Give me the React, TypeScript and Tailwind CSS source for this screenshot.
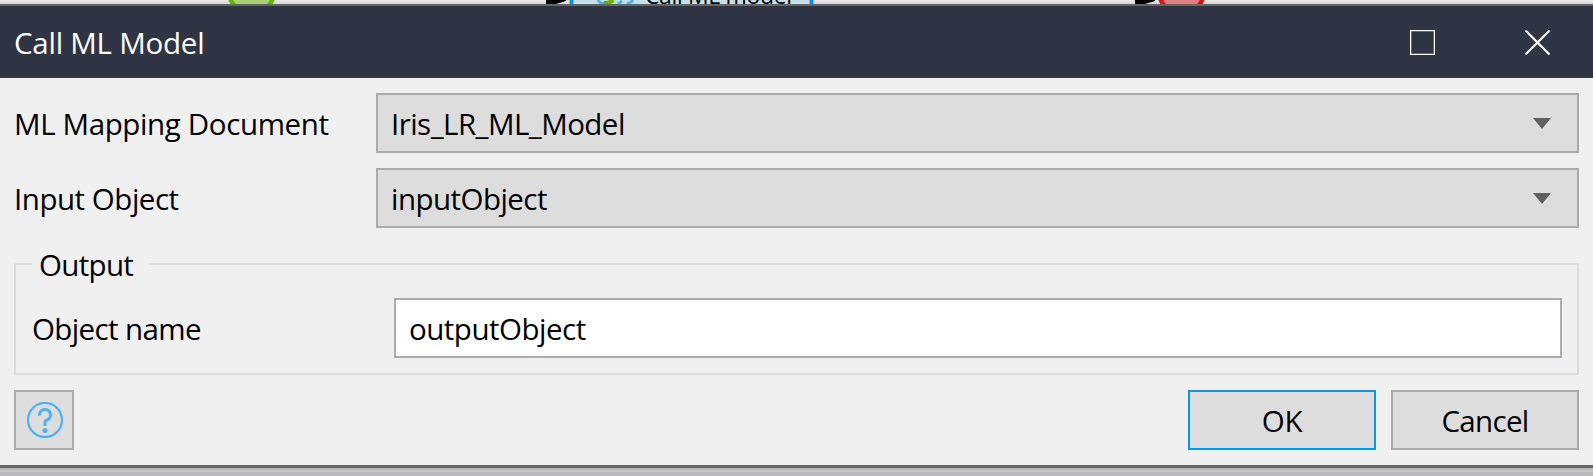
const T = "leading-[40px] whitespace-nowrap";

function Arrow() {
  return (
    <svg width="18" height="11" viewBox="0 0 18 11" className="block">
      <path d="M0 0H18L9 11Z" fill="#606060" />
    </svg>
  );
}

function Combo({ value }: { value: string }) {
  return (
    <div className="flex h-[60px] w-[1203px] items-center justify-between border-2 border-[#ababab] bg-[#dddddd] pl-[13px] pr-[26px]">
      <span className={`${T} pt-[2px] tracking-[-0.54px]`}>{value}</span>
      <Arrow />
    </div>
  );
}

function Diagram() {
  return (
    <svg width="1593" height="4" viewBox="0 0 1593 4" className="block shrink-0">
      <defs>
        <linearGradient id="sh" x1="0" y1="0" x2="0" y2="1">
          <stop offset="0" stopColor="#ebebeb" />
          <stop offset="1" stopColor="#d6d6d6" />
        </linearGradient>
      </defs>
      <rect width="1593" height="4" fill="url(#sh)" />
      <circle cx="251.500" cy="-9" r="22.500" fill="#abd174" stroke="#68b500" strokeWidth="4.500" />
      <path d="M546 0H566V1L556 4H546Z" fill="#000" />
      <rect x="571.500" y="-50" width="240" height="80" fill="#c9dfe8" stroke="#0c94e4" strokeWidth="4" />
      <path d="M598 0Q602 6 606 2" fill="none" stroke="#4bb0f5" strokeWidth="3" />
      <path d="M604 3Q611 3 613 0" fill="none" stroke="#68b500" strokeWidth="4" />
      <path d="M618 4L622 1M627 4Q632 2 633 0" fill="none" stroke="#4bb0f5" strokeWidth="3" />
      <text x="645" y="4" fontSize="23" fill="#000" textLength="147">Call ML model</text>
      <path d="M1135 0H1155V1L1145 4H1135Z" fill="#000" />
      <circle cx="1181.500" cy="-9" r="22.500" fill="#e27f84" stroke="#dc1219" strokeWidth="4.500" />
    </svg>
  );
}

export default function App() {
  return (
    <div className="flex h-[476px] w-[1593px] flex-col overflow-hidden bg-[#f0f0f0] text-[29.5px] font-normal text-black [font-family:'Open_Sans','Noto_Sans',sans-serif]">
      <Diagram />
      <header className="flex h-[74px] shrink-0 items-center justify-between border-t-2 border-[#666666] bg-[#2f3545] pl-[14px] pr-[43px] text-white">
        <h1 className={`${T} pt-[2px] tracking-[-0.24px]`}>Call ML Model</h1>
        <div className="flex items-center gap-[90px]">
          <svg width="25" height="25" viewBox="0 0 25 25" fill="none">
            <rect x=".6" y=".6" width="23.800" height="23.800" stroke="#fff" strokeWidth="1.300" />
          </svg>
          <svg width="25" height="25" viewBox="0 0 25 25" fill="none">
            <path d="M.5.5L24.500 24.500M24.500.5L.5 24.500" stroke="#fff" strokeWidth="2.200" />
          </svg>
        </div>
      </header>
      <main className="flex h-[387px] shrink-0 flex-col px-[14px] pt-[15px]">
        <div className="flex items-center justify-between">
          <span className={`${T} pt-[2px] tracking-[-0.37px]`}>ML Mapping Document</span>
          <Combo value="Iris_LR_ML_Model" />
        </div>
        <div className="mt-[15px] flex items-center justify-between">
          <span className={`${T} pt-[2px] tracking-[-0.47px]`}>Input Object</span>
          <Combo value="inputObject" />
        </div>
        <section className="mt-[17px] flex h-[130px] flex-col">
          <div className="flex h-[36px] items-start">
            <div className="mt-[18px] h-[18px] w-[18px] border-l-2 border-t-2 border-[#dcdcdc]" />
            <span className={`${T} w-[117px] pl-[7px] tracking-[-0.68px]`}>Output</span>
            <div className="mt-[18px] h-[18px] grow border-r-2 border-t-2 border-[#dcdcdc]" />
          </div>
          <div className="flex grow items-start justify-between border-x-2 border-b-2 border-[#dcdcdc] pl-[16px] pr-[15px] pt-[17px]">
            <span className={`${T} mt-[11px] tracking-[-0.61px]`}>Object name</span>
            <div className="flex h-[60px] w-[1168px] items-center border-2 border-[#abadb3] bg-white pl-[13px]">
              <span className={`${T} pt-[2px] tracking-[-0.5px]`}>outputObject</span>
            </div>
          </div>
        </section>
        <footer className="mt-[15px] flex items-center">
          <button className="flex h-[60px] w-[60px] items-center justify-center border-2 border-[#ababab] bg-[#dddddd]">
            <svg width="36" height="36" viewBox="0 0 36 36" fill="none" stroke="#4ab0f8" className="mb-[1px] ml-[1px]">
              <circle cx="18" cy="18" r="17" strokeWidth="2.200" />
              <path d="M12.500 13.500A5.500 5.500 0 1 1 19.500 18.200Q18 18.700 18 20V24" strokeWidth="3" />
              <circle cx="18" cy="28.500" r="2.500" fill="#4ab0f8" stroke="none" />
            </svg>
          </button>
          <button className="ml-auto flex h-[60px] w-[188px] items-center justify-center border-2 border-[#0099f2] bg-[#dddddd]">
            <span className={`${T} pt-[2px] tracking-[-0.2px]`}>OK</span>
          </button>
          <button className="ml-[15px] flex h-[60px] w-[188px] items-center justify-center border-2 border-[#ababab] bg-[#dddddd]">
            <span className={`${T} pt-[2px] tracking-[-0.7px]`}>Cancel</span>
          </button>
        </footer>
      </main>
      <div className="h-[3px] shrink-0 bg-[#666666]" />
      <div className="h-[4px] shrink-0 bg-linear-to-b from-[#b4b4b4] to-[#cccccc]" />
      <div className="h-[4px] shrink-0 bg-[#bab9be]" />
    </div>
  );
}
